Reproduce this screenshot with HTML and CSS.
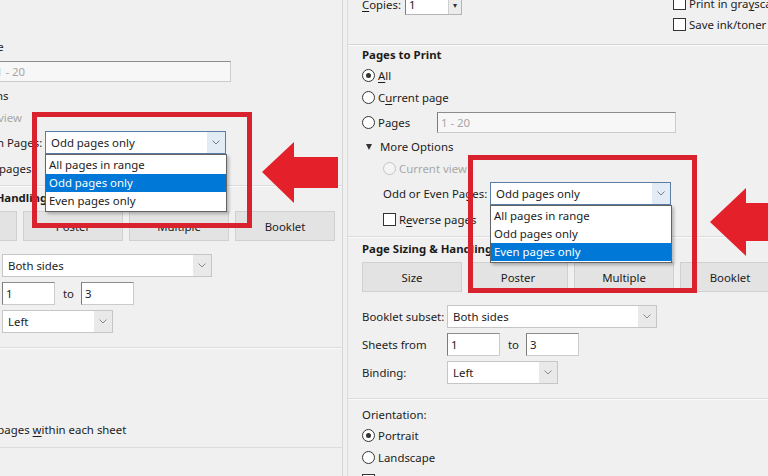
FILE: index.html
```html
<!DOCTYPE html>
<html lang="en">
<head>
    <meta charset="UTF-8">
    <meta name="viewport" content="width=device-width, initial-scale=1.0">
    <title>Print - Odd or Even Pages</title>
    <link rel="stylesheet" href="styles.css">
</head>
<body>

<div class="shot">

    <!-- first capture: hovering "Odd pages only" (scrolled, copies row is out of view) -->
    <div class="panel panel-left">
        <section class="dialog">
            <div class="group pages-group">
                <h4>Pages to Print</h4>
                <div class="row r-all"><span class="radio on"></span><span><u>A</u>ll</span></div>
                <div class="row r-cur"><span class="radio"></span><span>C<u>u</u>rrent page</span></div>
                <div class="row r-pages"><span class="radio"></span><span class="pages-lbl">Pages</span><span class="field range">1 - 20</span></div>
                <div class="row r-more"><span class="tri"></span><span>More Options</span></div>
                <div class="sub">
                    <div class="row r-view off"><span class="radio"></span><span>Current view</span></div>
                    <div class="row r-odd">
                        <span class="odd-lbl">Odd or Even Pages:</span>
                        <div class="select focus odd-select">Odd pages only
                            <span class="chev"><svg width="8" height="5" viewBox="0 0 8 5"><path d="M0.5 0.5L4 4L7.5 0.5" fill="none" stroke="#6d7f91"/></svg></span>
                            <ul class="list">
                                <li>All pages in range</li>
                                <li class="hl">Odd pages only</li>
                                <li>Even pages only</li>
                            </ul>
                        </div>
                    </div>
                    <div class="row r-rev"><span class="box"></span><span>R<u>e</u>verse pages</span></div>
                </div>
            </div>

            <div class="group sizing">
                <h4>Page Sizing &amp; Handling</h4>
                <div class="modes">
                    <button>Size</button>
                    <button>Poster</button>
                    <button>Multiple</button>
                    <button>Booklet</button>
                </div>
                <div class="form">
                    <div class="row"><span class="form-lbl">Booklet subset:</span>
                        <div class="select subset">Both sides<span class="chev"><svg width="8" height="5" viewBox="0 0 8 5"><path d="M0.5 0.5L4 4L7.5 0.5" fill="none" stroke="#8a8a8a"/></svg></span></div>
                    </div>
                    <div class="row"><span class="form-lbl">Sheets from</span><span class="field num">1</span><span class="to">to</span><span class="field num">3</span></div>
                    <div class="row"><span class="form-lbl">Binding:</span>
                        <div class="select binding">Left<span class="chev"><svg width="8" height="5" viewBox="0 0 8 5"><path d="M0.5 0.5L4 4L7.5 0.5" fill="none" stroke="#8a8a8a"/></svg></span></div>
                    </div>
                </div>
            </div>

            <div class="group orient">
                <div class="row r-orient">Orientation:</div>
                <div class="row"><span class="radio on"></span><span>Portrait</span></div>
                <div class="row"><span class="radio"></span><span>Landscape</span></div>
                <div class="row r-auto"><span class="box"></span><span>Auto-rotate pages <u>w</u>ithin each sheet</span></div>
            </div>
        </section>

        <div class="mark mark-left"></div>
        <svg class="arrow arrow-left" width="76" height="61" viewBox="0 0 76 61">
            <polygon points="0,30 32,0 32,15 76,15 76,46 32,46 32,61" fill="#e4202b"/>
        </svg>
    </div>

    <!-- second capture: hovering "Even pages only" -->
    <div class="panel panel-right">
        <section class="dialog">
            <div class="top-opts">
                <div class="copies">
                    <span class="copies-lbl"><u>C</u>opies:</span>
                    <span class="spin"><span class="spin-val">1</span><span class="spin-btn">&#9662;</span></span>
                </div>
                <div class="checks">
                    <div class="row"><span class="box"></span><span>Print in gra<u>y</u>scale</span></div>
                    <div class="row"><span class="box"></span><span>Save ink/toner</span></div>
                </div>
            </div>

            <div class="group pages-group">
                <h4>Pages to Print</h4>
                <div class="row r-all"><span class="radio on"></span><span><u>A</u>ll</span></div>
                <div class="row r-cur"><span class="radio"></span><span>C<u>u</u>rrent page</span></div>
                <div class="row r-pages"><span class="radio"></span><span class="pages-lbl">Pages</span><span class="field range">1 - 20</span></div>
                <div class="row r-more"><span class="tri"></span><span>More Options</span></div>
                <div class="sub">
                    <div class="row r-view off"><span class="radio"></span><span>Current view</span></div>
                    <div class="row r-odd">
                        <span class="odd-lbl">Odd or Even Pages:</span>
                        <div class="select focus odd-select">Odd pages only
                            <span class="chev"><svg width="8" height="5" viewBox="0 0 8 5"><path d="M0.5 0.5L4 4L7.5 0.5" fill="none" stroke="#6d7f91"/></svg></span>
                            <ul class="list">
                                <li>All pages in range</li>
                                <li>Odd pages only</li>
                                <li class="hl">Even pages only</li>
                            </ul>
                        </div>
                    </div>
                    <div class="row r-rev"><span class="box"></span><span>R<u>e</u>verse pages</span></div>
                </div>
            </div>

            <div class="group sizing">
                <h4>Page Sizing &amp; Handling</h4>
                <div class="modes">
                    <button>Size</button>
                    <button>Poster</button>
                    <button>Multiple</button>
                    <button>Booklet</button>
                </div>
                <div class="form">
                    <div class="row"><span class="form-lbl">Booklet subset:</span>
                        <div class="select subset">Both sides<span class="chev"><svg width="8" height="5" viewBox="0 0 8 5"><path d="M0.5 0.5L4 4L7.5 0.5" fill="none" stroke="#8a8a8a"/></svg></span></div>
                    </div>
                    <div class="row"><span class="form-lbl">Sheets from</span><span class="field num">1</span><span class="to">to</span><span class="field num">3</span></div>
                    <div class="row"><span class="form-lbl">Binding:</span>
                        <div class="select binding">Left<span class="chev"><svg width="8" height="5" viewBox="0 0 8 5"><path d="M0.5 0.5L4 4L7.5 0.5" fill="none" stroke="#8a8a8a"/></svg></span></div>
                    </div>
                </div>
            </div>

            <div class="group orient">
                <div class="row r-orient">Orientation:</div>
                <div class="row"><span class="radio on"></span><span>Portrait</span></div>
                <div class="row"><span class="radio"></span><span>Landscape</span></div>
                <div class="row r-auto"><span class="box"></span><span>Auto-rotate pages <u>w</u>ithin each sheet</span></div>
            </div>
        </section>

        <div class="mark mark-right"></div>
        <svg class="arrow arrow-right" width="68" height="68" viewBox="0 0 68 68">
            <polygon points="0,34 36,0 36,15 68,15 68,53 36,53 36,68" fill="#e4202b"/>
        </svg>
    </div>

</div>

</body>
</html>
```

FILE: styles.css
```css
* {
    box-sizing: border-box;
}
body {
    margin: 0;
    background-color: #f0f0f0;
    font-family: "Noto Sans", "Segoe UI", sans-serif;
    font-size: 11.4px;
    color: #1c1c1c;
}
u {
    text-decoration-thickness: 1px;
    text-underline-offset: 2px;
}

/* two captures side by side */
.shot {
    display: flex;
    width: 768px;
    height: 476px;
    overflow: hidden;
}
.panel {
    position: relative;
    height: 476px;
    overflow: hidden;
    background-color: #f0f0f0;
}
.panel-left {
    width: 343px;
    flex: none;
    border-right: 1px solid #d6d6d6;
}
.panel-right {
    flex: 1;
    margin-left: 4px;
    border-left: 1px solid #dadada;
}

.dialog {
    width: 439px;
    flex: none;
}
.panel-left .dialog {
    margin: -6px 0 0 -97px;
}
.panel-right .dialog {
    margin-top: -10px;
}

.row {
    display: flex;
    align-items: center;
    height: 22px;
    padding-left: 14px;
    white-space: nowrap;
}

/* copies + print options */
.top-opts {
    display: flex;
    height: 55px;
    border-bottom: 1px solid #d5d5d5;
    box-shadow: 0 1px 0 #fafafa;
}
.copies {
    width: 325px;
    height: 28px;
    padding-left: 14px;
    display: flex;
    align-items: center;
}
.copies-lbl {
    width: 43px;
}
.spin {
    position: relative;
    width: 57px;
    height: 21px;
    background-color: #fff;
    border: 1px solid #b4b4b4;
    border-left-color: #7a7a7a;
    padding-left: 3px;
    line-height: 19px;
}
.spin-btn {
    position: absolute;
    right: 0;
    top: 0;
    width: 13px;
    height: 19px;
    border-left: 1px solid #cfcfcf;
    background-color: #ececec;
    font-size: 8px;
    text-align: center;
    line-height: 19px;
    color: #333;
}
.checks {
    padding-top: 3px;
}
.checks .row {
    height: 21px;
    padding-left: 0;
}

/* controls */
.radio {
    width: 13px;
    height: 13px;
    border: 1px solid #333;
    border-radius: 50%;
    background-color: #fff;
    margin-right: 3px;
    flex: none;
    position: relative;
}
.radio.on::after {
    content: "";
    position: absolute;
    left: 3px;
    top: 3px;
    width: 5px;
    height: 5px;
    border-radius: 50%;
    background-color: #333;
}
.box {
    width: 13px;
    height: 13px;
    border: 1px solid #333;
    background-color: #fff;
    margin-right: 3px;
    flex: none;
}
.off {
    color: #a8a8a8;
}
.off .radio {
    border-color: #c4c4c4;
    background-color: #f4f4f4;
}
.field {
    height: 21px;
    background-color: #fff;
    border: 1px solid #cbcbcb;
    border-top-color: #8c8c8c;
    border-left-color: #7c7c7c;
    padding-left: 3px;
    line-height: 19px;
}
.field.range {
    width: 239px;
    color: #a6a6a6;
    background-color: #f7f7f7;
}
.field.num {
    width: 53px;
    height: 23px;
    line-height: 21px;
}
.select {
    position: relative;
    height: 23px;
    background-color: #fff;
    border: 1px solid #c6c6c6;
    padding-left: 5px;
    line-height: 21px;
}
.select.focus {
    border-color: #5a7ea6;
}
.chev {
    position: absolute;
    right: 0;
    top: 0;
    width: 18px;
    height: 21px;
    background-color: #e9e9e9;
    display: flex;
    align-items: center;
    justify-content: center;
}
.focus .chev {
    background-color: #e3ecf5;
}

/* pages to print */
.group h4 {
    margin: 0;
    height: 18px;
    line-height: 18px;
    padding-left: 14px;
    font-size: 11.4px;
    font-weight: bold;
}
.pages-group {
    padding: 1px 0 5px;
    border-bottom: 1px solid #dcdcdc;
    box-shadow: 0 1px 0 #fafafa;
}
.r-cur {
    height: 23px;
}
.r-pages {
    height: 27px;
}
.pages-lbl {
    width: 59px;
}
.r-more {
    height: 21px;
}
.tri {
    width: 0;
    height: 0;
    margin: 0 8px 0 4px;
    border-left: 3.5px solid transparent;
    border-right: 3.5px solid transparent;
    border-top: 6px solid #333;
}
.sub {
    padding-left: 21px;
}
.r-odd {
    height: 28px;
}
.r-rev {
    height: 24px;
}
.odd-lbl {
    width: 107px;
}
.odd-select {
    width: 181px;
}
.list {
    position: absolute;
    left: -1px;
    top: 22px;
    width: 182px;
    margin: 0;
    padding: 1px 0;
    list-style: none;
    background-color: #fff;
    border: 1px solid #646464;
    box-shadow: 2px 2px 3px rgba(0,0,0,0.25);
    z-index: 2;
}
.list li {
    height: 18px;
    line-height: 18px;
    padding-left: 3px;
}
.list li.hl {
    background-color: #0078d7;
    color: #fff;
}

/* page sizing */
.sizing {
    padding: 3px 0 12px;
    border-bottom: 1px solid #dcdcdc;
    box-shadow: 0 1px 0 #fafafa;
}
.modes {
    display: flex;
    gap: 6px;
    margin-top: 4px;
    padding-left: 14px;
}
.modes button {
    width: 100px;
    height: 30px;
    flex: none;
    background-color: #e3e3e3;
    border: 1px solid #d0d0d0;
    font-family: inherit;
    font-size: 11.4px;
    color: #1c1c1c;
}
.form {
    margin-top: 10px;
}
.form .row {
    height: 28px;
}
.form-lbl {
    width: 85px;
}
.subset {
    width: 210px;
}
.binding {
    width: 111px;
}
.to {
    margin: 0 7px 0 8px;
}

/* orientation */
.orient {
    padding: 5px 0 6px;
    border-bottom: 1px solid #dcdcdc;
}
.r-orient {
    height: 20px;
}
.r-auto {
    height: 24px;
}

/* red annotations drawn over the captures */
.mark {
    position: absolute;
    border: 5px solid #d8222e;
    z-index: 3;
}
.mark-left {
    left: 32px;
    top: 112px;
    width: 220px;
    height: 116px;
}
.mark-right {
    left: 120px;
    top: 155px;
    width: 229px;
    height: 138px;
}
.arrow {
    position: absolute;
    z-index: 3;
}
.arrow-left {
    left: 262px;
    top: 142px;
}
.arrow-right {
    left: 362px;
    top: 188px;
}
```
